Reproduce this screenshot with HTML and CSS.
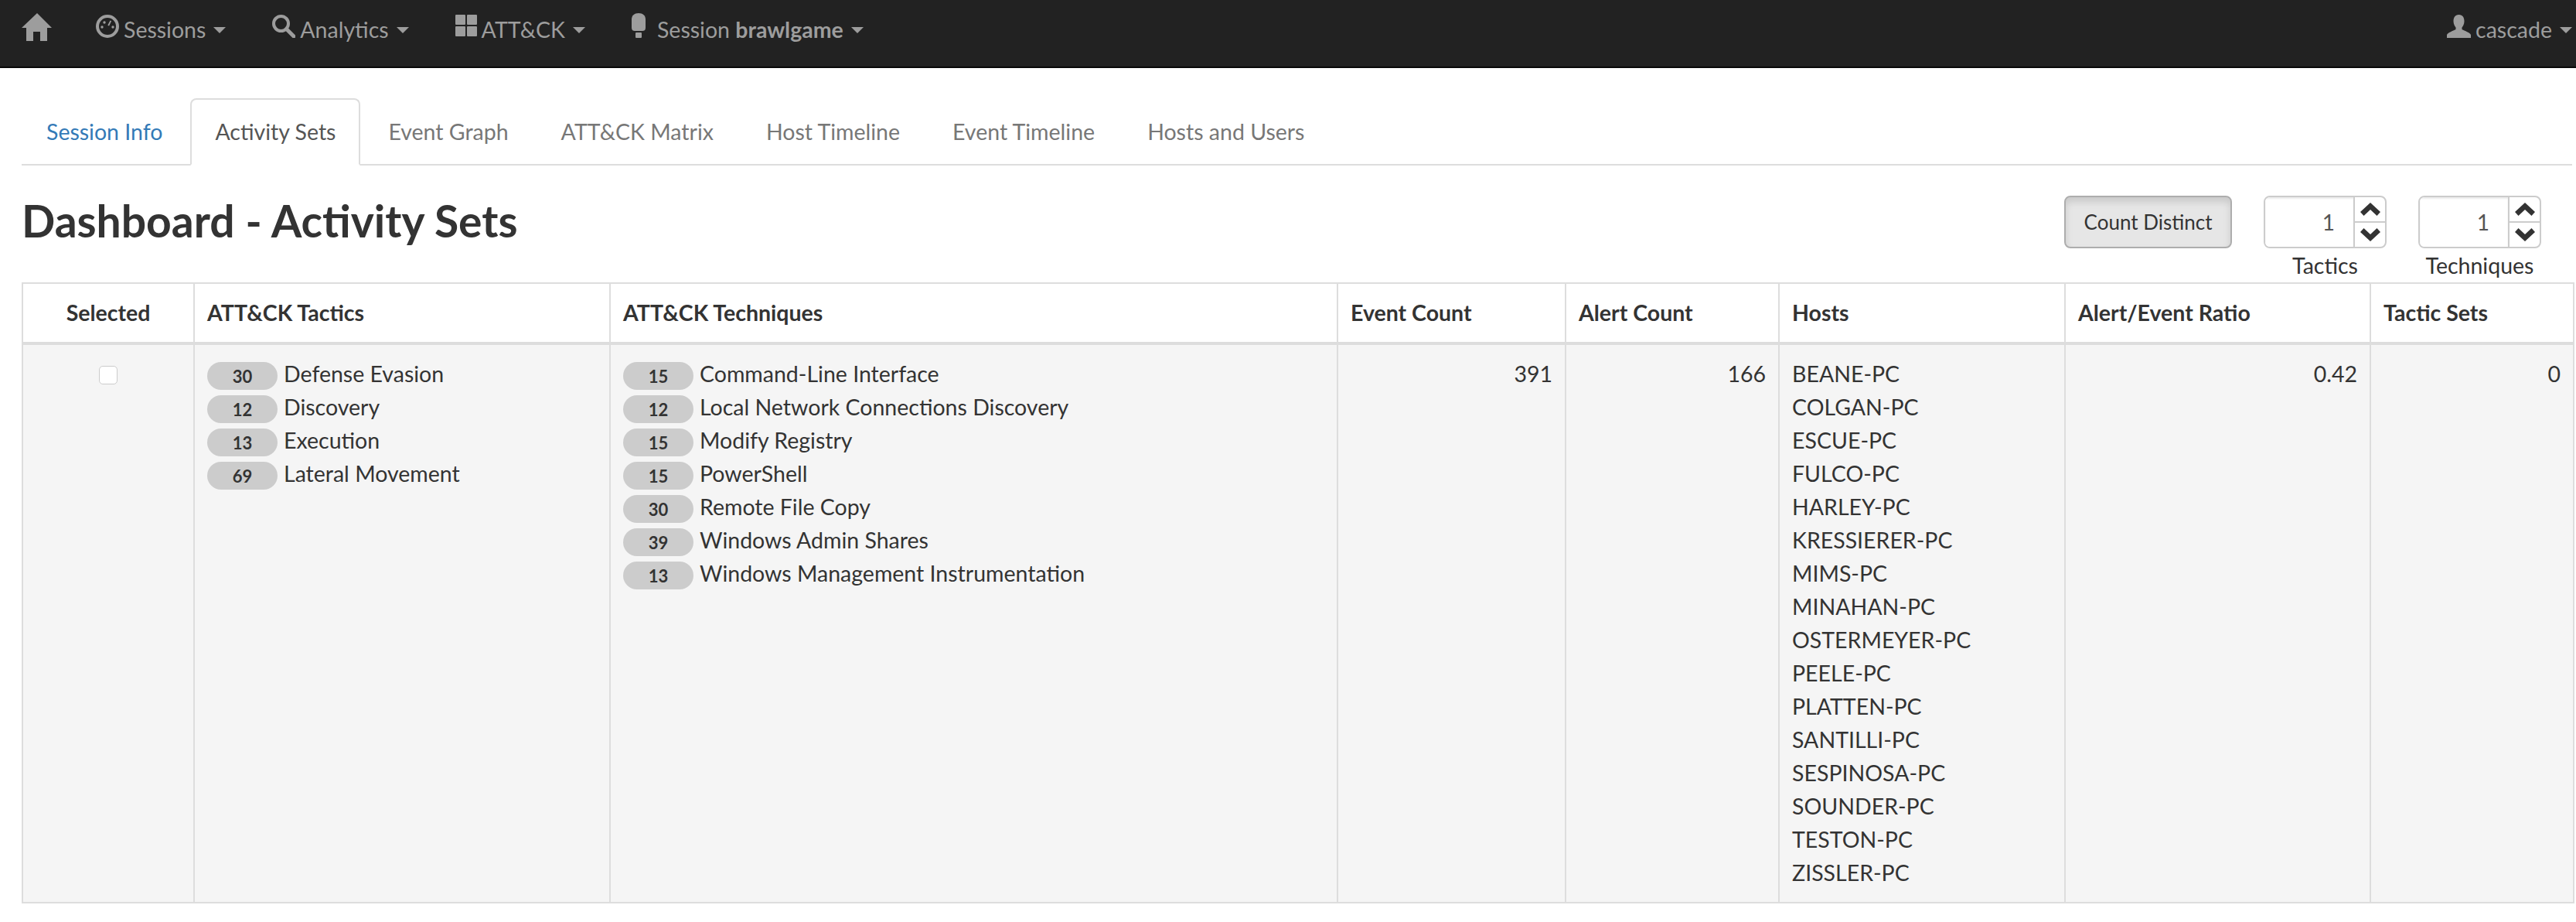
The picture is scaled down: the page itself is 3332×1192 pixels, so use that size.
FILE: index.html
```html
<!DOCTYPE html>
<html lang="en">
<head>
    <meta charset="utf-8" />
    <title>Dashboard - Activity Sets</title>
    <link rel="stylesheet" href="styles.css">
</head>
<body>
<nav class="navbar">
    <a class="nav-link nav-home">
        <svg class="icon" width="39" height="36" viewBox="0 0 39 36"><path d="M20 0L39 19H33V36H24V24H15V36H6V19H0Z"/></svg>
    </a>
    <a class="nav-link">
        <svg class="icon" width="30" height="30" viewBox="0 0 30 30"><circle class="ring" cx="15" cy="15" r="13"/><circle cx="8" cy="16" r="1.7"/><circle cx="22" cy="16" r="1.7"/><circle cx="11" cy="10" r="1.7"/><path d="M18.5 7.5l1.6.8-3 6.2-1.8-.8z"/></svg>
        <span>Sessions</span><i class="caret"></i>
    </a>
    <a class="nav-link">
        <svg class="icon" width="30" height="30" viewBox="0 0 30 30"><circle class="ring" cx="11.5" cy="11.5" r="9.5"/><path class="handle" d="M18.5 18.5L28 28"/></svg>
        <span>Analytics</span><i class="caret"></i>
    </a>
    <a class="nav-link">
        <svg class="icon" width="28" height="28" viewBox="0 0 28 28"><rect width="13" height="13" rx="1"/><rect x="15" width="13" height="13" rx="1"/><rect y="15" width="13" height="13" rx="1"/><rect x="15" y="15" width="13" height="13" rx="1"/></svg>
        <span>ATT&amp;CK</span><i class="caret"></i>
    </a>
    <a class="nav-link">
        <svg class="icon icon-pin" width="18" height="32" viewBox="0 0 18 32"><path d="M9 0C3.500 0 0 3 0 8V19C0 22 2 23 4 23H14C16 23 18 22 18 19V8C18 3 14.500 0 9 0Z"/><rect x="5" y="25" width="8" height="7" rx="1"/></svg>
        <span>Session <b>brawlgame</b></span><i class="caret"></i>
    </a>
    <a class="nav-link nav-user">
        <svg class="icon" width="31" height="30" viewBox="0 0 31 30"><path d="M15.500 0C10.500 0 8.500 4 8.500 8.500C8.500 12.500 10.500 15 11.500 16.500V19C8 21 1 23 0 26V30H31V26C30 23 23 21 19.500 19V16.500C20.500 15 22.500 12.500 22.500 8.500C22.500 4 20.500 0 15.500 0Z"/></svg>
        <span>cascade</span><i class="caret"></i>
    </a>
</nav>

<div class="mainbody">
    <ul class="tabs">
        <li class="tab tab-link">Session Info</li>
        <li class="tab tab-active">Activity Sets</li>
        <li class="tab">Event Graph</li>
        <li class="tab">ATT&amp;CK Matrix</li>
        <li class="tab">Host Timeline</li>
        <li class="tab">Event Timeline</li>
        <li class="tab">Hosts and Users</li>
    </ul>

    <div class="toolbar">
        <h1>Dashboard - Activity Sets</h1>
        <div class="controls">
            <button class="btn-distinct">Count Distinct</button>
            <div class="spin-group">
                <div class="spinner">
                    <input class="spin-value" type="text" value="1" />
                    <div class="spin-arrows">
                        <span class="spin-arrow"><svg width="26" height="17" viewBox="0 0 26 17"><path d="M13 0L26 12L21.500 17L13 9L4.500 17L0 12Z"/></svg></span>
                        <span class="spin-arrow"><svg width="26" height="17" viewBox="0 0 26 17"><path d="M13 17L26 5L21.500 0L13 8L4.500 0L0 5Z"/></svg></span>
                    </div>
                </div>
                <div class="spin-label">Tactics</div>
            </div>
            <div class="spin-group">
                <div class="spinner">
                    <input class="spin-value" type="text" value="1" />
                    <div class="spin-arrows">
                        <span class="spin-arrow"><svg width="26" height="17" viewBox="0 0 26 17"><path d="M13 0L26 12L21.500 17L13 9L4.500 17L0 12Z"/></svg></span>
                        <span class="spin-arrow"><svg width="26" height="17" viewBox="0 0 26 17"><path d="M13 17L26 5L21.500 0L13 8L4.500 0L0 5Z"/></svg></span>
                    </div>
                </div>
                <div class="spin-label">Techniques</div>
            </div>
        </div>
    </div>

    <table class="sets">
        <colgroup>
            <col class="col-selected"><col class="col-tactics"><col class="col-techniques"><col class="col-events">
            <col class="col-alerts"><col class="col-hosts"><col class="col-ratio"><col class="col-sets">
        </colgroup>
        <thead>
            <tr>
                <th class="center">Selected</th>
                <th>ATT&amp;CK Tactics</th>
                <th>ATT&amp;CK Techniques</th>
                <th>Event Count</th>
                <th>Alert Count</th>
                <th>Hosts</th>
                <th>Alert/Event Ratio</th>
                <th>Tactic Sets</th>
            </tr>
        </thead>
        <tbody>
            <tr>
                <td class="center"><input class="pick" type="checkbox" /></td>
                <td>
                    <div class="count-row"><span class="badge">30</span>Defense Evasion</div>
                    <div class="count-row"><span class="badge">12</span>Discovery</div>
                    <div class="count-row"><span class="badge">13</span>Execution</div>
                    <div class="count-row"><span class="badge">69</span>Lateral Movement</div>
                </td>
                <td>
                    <div class="count-row"><span class="badge">15</span>Command-Line Interface</div>
                    <div class="count-row"><span class="badge">12</span>Local Network Connections Discovery</div>
                    <div class="count-row"><span class="badge">15</span>Modify Registry</div>
                    <div class="count-row"><span class="badge">15</span>PowerShell</div>
                    <div class="count-row"><span class="badge">30</span>Remote File Copy</div>
                    <div class="count-row"><span class="badge">39</span>Windows Admin Shares</div>
                    <div class="count-row"><span class="badge">13</span>Windows Management Instrumentation</div>
                </td>
                <td class="num">391</td>
                <td class="num">166</td>
                <td>
                    <div>BEANE-PC</div>
                    <div>COLGAN-PC</div>
                    <div>ESCUE-PC</div>
                    <div>FULCO-PC</div>
                    <div>HARLEY-PC</div>
                    <div>KRESSIERER-PC</div>
                    <div>MIMS-PC</div>
                    <div>MINAHAN-PC</div>
                    <div>OSTERMEYER-PC</div>
                    <div>PEELE-PC</div>
                    <div>PLATTEN-PC</div>
                    <div>SANTILLI-PC</div>
                    <div>SESPINOSA-PC</div>
                    <div>SOUNDER-PC</div>
                    <div>TESTON-PC</div>
                    <div>ZISSLER-PC</div>
                </td>
                <td class="num">0.42</td>
                <td class="num">0</td>
            </tr>
        </tbody>
    </table>
</div>
</body>
</html>
```

FILE: styles.css
```css
html, body {
    margin: 0;
    padding: 0;
    background: #fff;
}

body {
    font-family: Lato, "Noto Sans", sans-serif;
    font-size: 28.5px;
    line-height: 43px;
    color: #333;
}

.navbar {
    display: flex;
    height: 86px;
    padding-left: 28px;
    padding-right: 5px;
    background-color: #222;
    border-bottom: 2px solid #080808;
    color: #9d9d9d;
}

.nav-link {
    display: flex;
    align-items: flex-start;
    padding: 0 30px;
    line-height: 76px;
}

.nav-home {
    padding-left: 0;
    padding-right: 27px;
}

.nav-user {
    margin-left: auto;
    padding: 0;
}

.icon {
    margin-top: 19px;
    margin-right: 6px;
    fill: #9d9d9d;
    flex: none;
}

.nav-home .icon {
    margin-top: 17px;
    margin-right: 0;
}

.icon-pin {
    margin-top: 17px;
    margin-right: 15px;
}

.ring {
    fill: none;
    stroke: #9d9d9d;
    stroke-width: 4;
}

.handle {
    fill: none;
    stroke: #9d9d9d;
    stroke-width: 5;
    stroke-linecap: round;
}

.caret {
    width: 0;
    height: 0;
    margin-top: 35px;
    margin-left: 10px;
    border-top: 8px solid #9d9d9d;
    border-left: 8px solid transparent;
    border-right: 8px solid transparent;
}

.mainbody {
    padding: 39px 5px 0 28px;
}

.tabs {
    display: flex;
    gap: 4px;
    margin: 0;
    padding: 0;
    list-style: none;
    border-bottom: 2px solid #ddd;
}

.tab {
    padding: 20px 30px;
    margin-bottom: -2px;
    border: 2px solid transparent;
    border-radius: 8px 8px 0 0;
    color: #777;
}

.tab-link {
    color: #337ab7;
}

.tab-active {
    color: #555;
    background: #fff;
    border-color: #ddd #ddd #fff;
}

.toolbar {
    display: flex;
    justify-content: space-between;
    height: 151px;
}

h1 {
    margin: 0;
    padding-top: 38px;
    font-size: 57px;
    line-height: 66px;
    font-weight: bold;
    color: #333;
}

.controls {
    display: flex;
    align-items: flex-start;
    gap: 41px;
    padding-top: 39px;
    padding-right: 40px;
}

.btn-distinct {
    width: 217px;
    height: 68px;
    padding: 0;
    font-family: inherit;
    font-size: 26px;
    color: #333;
    background: #e6e6e6;
    border: 2px solid #adadad;
    border-radius: 8px;
    box-shadow: inset 0 6px 10px rgba(0, 0, 0, 0.125);
}

.spin-group {
    width: 159px;
    text-align: center;
    line-height: 44px;
}

.spinner {
    display: flex;
    height: 68px;
    box-sizing: border-box;
    border: 2px solid #ccc;
    border-radius: 8px;
    background: #fff;
    overflow: hidden;
}

.spin-value {
    width: 114px;
    min-width: 0;
    padding: 0 24px 0 0;
    box-sizing: border-box;
    border: 0;
    outline: 0;
    text-align: right;
    font-family: inherit;
    font-size: 28px;
    color: #555;
    box-shadow: inset 0 2px 2px rgba(0, 0, 0, 0.075);
}

.spin-arrows {
    display: flex;
    flex-direction: column;
    flex: 1;
    border-left: 2px solid #ccc;
}

.spin-arrow {
    flex: 1;
    display: flex;
    align-items: center;
    justify-content: center;
}

.spin-arrow svg {
    fill: #333;
}

.spin-arrow + .spin-arrow {
    border-top: 2px solid #ccc;
}

table.sets {
    width: 3300px;
    table-layout: fixed;
    border-collapse: collapse;
    border: 2px solid #ddd;
}

.col-selected { width: 222px; }
.col-tactics { width: 538px; }
.col-techniques { width: 941px; }
.col-events { width: 295px; }
.col-alerts { width: 276px; }
.col-hosts { width: 370px; }
.col-ratio { width: 395px; }
.col-sets { width: 263px; }

th, td {
    padding: 16px;
    border: 2px solid #ddd;
    text-align: left;
    vertical-align: top;
}

th {
    border-bottom-width: 4px;
    font-weight: bold;
}

tbody td {
    background: #f5f5f5;
}

.center {
    text-align: center;
}

.num {
    text-align: right;
}

.pick {
    appearance: none;
    display: block;
    width: 24px;
    height: 24px;
    margin: 11px auto 0;
    background: #fff;
    border: 1px solid #ccc;
    border-radius: 5px;
}

.count-row {
    display: flex;
    align-items: flex-start;
}

.badge {
    width: 91px;
    height: 36px;
    margin-top: 6px;
    margin-right: 8px;
    flex: none;
    border-radius: 18px;
    background: #ccc;
    color: #333;
    font-size: 22px;
    font-weight: bold;
    line-height: 38px;
    text-align: center;
}
```
